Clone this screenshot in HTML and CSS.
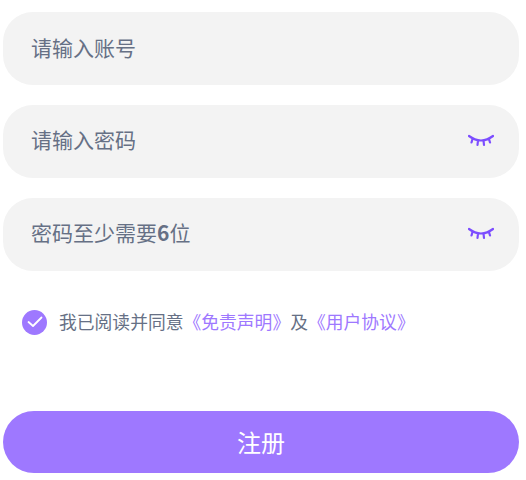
FILE: index.html
```html
<!DOCTYPE html>
<html lang="zh-CN">
<head>
    <meta charset="UTF-8">
    <meta name="viewport" content="width=device-width, initial-scale=1.0">
    <title>注册</title>
    <link rel="stylesheet" href="styles.css">
</head>
<body>
    <div class="form">
        <div class="field">
            <span class="placeholder">请输入账号</span>
        </div>
        <div class="field">
            <span class="placeholder">请输入密码</span>
            <svg class="eye" width="26" height="14" viewBox="0 0 26 14">
                <path d="M1 2C5 5 9 6.500 13 6.500S21 5 25 2M4.500 5L3.500 8.500M10 6.500L9.500 11M15.500 6.500L16 11M21 5L22 8.500" />
            </svg>
        </div>
        <div class="field">
            <span class="placeholder">密码至少需要<b class="digit">6</b>位</span>
            <svg class="eye" width="26" height="14" viewBox="0 0 26 14">
                <path d="M1 2C5 5 9 6.500 13 6.500S21 5 25 2M4.500 5L3.500 8.500M10 6.500L9.500 11M15.500 6.500L16 11M21 5L22 8.500" />
            </svg>
        </div>
        <div class="agree">
            <span class="check">
                <svg width="16" height="12" viewBox="0 0 16 12">
                    <path d="M1.500 6L6 10L14.500 1.500" />
                </svg>
            </span>
            <span class="agree-text">我已阅读并同意<a class="link">《免责声明》</a>及<a class="link">《用户协议》</a></span>
        </div>
        <div class="submit">注册</div>
    </div>
</body>
</html>
```

FILE: styles.css
```css
body {
    font-family: "Noto Sans CJK SC", "Noto Sans", sans-serif;
    margin: 0;
    background-color: #fff;
}
.form {
    padding: 12px 7px 0 3px;
}
.field {
    display: flex;
    align-items: center;
    justify-content: space-between;
    height: 73px;
    margin-bottom: 19.75px;
    padding: 0 25px 0 28px;
    background-color: #f3f3f3;
    border-radius: 30px;
    box-sizing: border-box;
}
.placeholder {
    margin-bottom: 4px;
    font-size: 21px;
    color: #667085;
}
.digit {
    font-weight: 700;
}
.eye {
    fill: none;
    stroke: #7c4dff;
    stroke-width: 2.2;
    stroke-linecap: round;
}
.agree {
    display: flex;
    align-items: center;
    margin-top: 38.75px;
    padding-left: 19px;
    height: 26px;
}
.check {
    display: flex;
    align-items: center;
    justify-content: center;
    width: 25px;
    height: 25px;
    border-radius: 50%;
    background-color: #9e78ff;
}
.check svg {
    fill: none;
    stroke: #fff;
    stroke-width: 1.8;
    stroke-linecap: round;
    stroke-linejoin: round;
}
.agree-text {
    margin-left: 12px;
    margin-bottom: 2px;
    font-size: 17.8px;
    color: #667085;
}
.link {
    color: #9e78ff;
}
.submit {
    margin-top: 76px;
    height: 62px;
    line-height: 62px;
    text-align: center;
    font-size: 24px;
    color: #fff;
    background-color: #9e78ff;
    border-radius: 31px;
}
```
